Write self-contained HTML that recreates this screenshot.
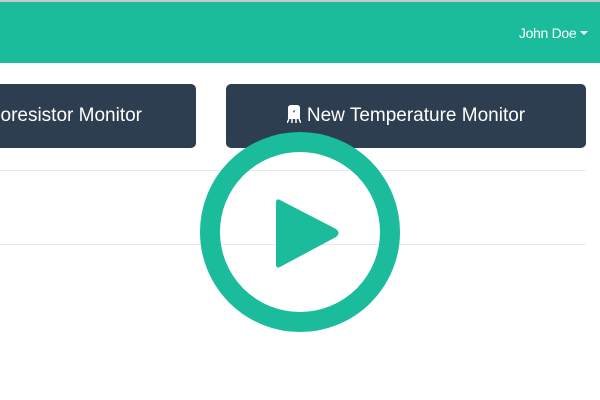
<!DOCTYPE html>
<html><head><style>
body{margin:0;width:600px;height:400px;overflow:hidden;background:#fff;font-family:"Liberation Sans",sans-serif;position:relative}
.top{position:absolute;top:0;left:0;width:600px;height:2px;background:#c8c8c8}
.nav{position:absolute;top:2px;left:0;width:600px;height:61px;background:#1abc9c}
.user{position:absolute;right:12px;top:23px;color:#fff;font-size:14px;letter-spacing:-0.3px}
.btn{position:absolute;top:84px;height:64px;background:#2c3e50;border-radius:5px;color:#fff;font-size:19px;line-height:64px;text-align:center;white-space:nowrap}
.hr{position:absolute;left:0;width:586px;height:1px;background:#eaeaea}
</style></head><body>
<div class="top"></div>
<div class="nav"><div class="user">John Doe <span style="display:inline-block;width:0;height:0;border-left:4px solid transparent;border-right:4px solid transparent;border-top:4px solid #fff;vertical-align:3px"></span></div></div>
<div class="btn" style="left:-40px;width:236px;overflow:hidden"><span style="position:absolute;right:54px">oresistor Monitor</span></div>
<div class="btn" style="left:226px;width:360px"><svg width="14" height="18" viewBox="0 0 14 18" style="vertical-align:-2px;margin-right:6px"><path d="M1 3Q1 0 4 0H10Q13 0 13 3V14H1Z" fill="#fff"/><path d="M0 18L2 14M5 18V14M9 18V14M12 14L14 18" stroke="#fff" stroke-width="1.5"/><path d="M6 6L8 5L7 8Z" fill="#2c3e50"/></svg>New Temperature Monitor</div>
<div class="hr" style="top:170px"></div>
<div class="hr" style="top:244px"></div>
<svg style="position:absolute;left:0;top:0" width="600" height="400">
<circle cx="300" cy="232" r="90" fill="none" stroke="#1abc9c" stroke-width="20"/>
<path d="M280 200 L336 229 Q341 233 336 237 L280 267 Q276 269 276 264 L276 203 Q276 198 280 200Z" fill="#1abc9c"/>
</svg>
</body></html>
